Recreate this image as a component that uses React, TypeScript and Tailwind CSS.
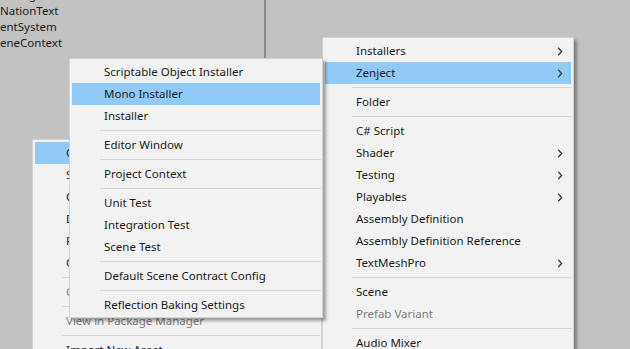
import React from "react";

type Entry = { label: string; arrow?: boolean; disabled?: boolean; active?: boolean } | "sep";

function Chevron() {
  return (
    <svg width="6" height="9" viewBox="0 0 6 9" className="shrink-0">
      <path d="M1.2 0.8 L4.6 4.5 L1.2 8.2" fill="none" stroke="#3c3c3c" strokeWidth="1.3" />
    </svg>
  );
}

function MenuList({ items, textPad, sepPad }: { items: Entry[]; textPad: string; sepPad: string }) {
  return (
    <div className="flex flex-col pt-[2px] pb-px">
      {items.map((it, i) =>
        it === "sep" ? (
          <div key={i} className={`h-[7px] flex items-center mr-px ${sepPad}`}>
            <div className="h-px flex-1 bg-[#d6d6d6]" />
          </div>
        ) : (
          <div
            key={i}
            className={`h-[22px] mx-[2px] flex items-center justify-between pr-[8px] ${textPad} ${
              it.active ? "bg-[#91c9f7]" : ""
            } ${it.disabled ? "text-[#7d7d7d]" : "text-[#1a1a1a]"}`}
          >
            <span className="whitespace-nowrap">{it.label}</span>
            {it.arrow && <Chevron />}
          </div>
        )
      )}
    </div>
  );
}

const createMenu: Entry[] = [
  { label: "Create", active: true },
  { label: "Show in Explorer" },
  { label: "Open" },
  { label: "Delete" },
  { label: "Rename" },
  { label: "Copy Path" },
  "sep",
  { label: "Open Scene Additive", disabled: true },
  "sep",
  { label: "View in Package Manager", disabled: true },
  "sep",
  { label: "Import New Asset..." },
];

const assetMenu: Entry[] = [
  { label: "Installers", arrow: true },
  { label: "Zenject", arrow: true, active: true },
  "sep",
  { label: "Folder" },
  "sep",
  { label: "C# Script" },
  { label: "Shader", arrow: true },
  { label: "Testing", arrow: true },
  { label: "Playables", arrow: true },
  { label: "Assembly Definition" },
  { label: "Assembly Definition Reference" },
  { label: "TextMeshPro", arrow: true },
  "sep",
  { label: "Scene" },
  { label: "Prefab Variant", disabled: true },
  "sep",
  { label: "Audio Mixer" },
];

const zenjectMenu: Entry[] = [
  { label: "Scriptable Object Installer" },
  { label: "Mono Installer", active: true },
  { label: "Installer" },
  "sep",
  { label: "Editor Window" },
  "sep",
  { label: "Project Context" },
  "sep",
  { label: "Unit Test" },
  { label: "Integration Test" },
  { label: "Scene Test" },
  "sep",
  { label: "Default Scene Contract Config" },
  "sep",
  { label: "Reflection Baking Settings" },
];

export default function App() {
  return (
    <div className="relative w-[630px] h-[349px] overflow-hidden bg-[#c2c2c2] font-['Noto_Sans',sans-serif] text-[11.5px] leading-none">
      {/* hierarchy panel behind the menus */}
      <div className="flex h-full">
        <div className="w-[264px] flex flex-col -mt-[13px] text-[#1b1b1b]">
          <div className="h-[16px] flex items-center">Debug</div>
          <div className="h-[16px] flex items-center">NationText</div>
          <div className="h-[16px] flex items-center">entSystem</div>
          <div className="h-[16px] flex items-center">eneContext</div>
        </div>
        <div className="w-[2px] h-full bg-[#8b8b8b]" />
      </div>

      {/* Create menu (parent) */}
      <div className="absolute left-[32px] top-[139px] w-[290px] h-[230px] bg-[#f2f2f2] border border-[#d2d2d2] z-10">
        <MenuList items={createMenu} textPad="pl-[31px]" sepPad="ml-[29px]" />
      </div>

      {/* Assets menu */}
      <div className="absolute left-[322px] top-[37px] w-[252px] h-[330px] bg-[#f2f2f2] border border-[#d2d2d2] shadow-[3px_3px_3px_rgba(0,0,0,0.35)] z-20">
        <MenuList items={assetMenu} textPad="pl-[31px]" sepPad="ml-[29px]" />
      </div>

      {/* Zenject submenu */}
      <div className="absolute left-[69px] top-[58px] w-[254px] bg-[#f2f2f2] border border-[#d2d2d2] shadow-[3px_3px_3px_rgba(0,0,0,0.35)] z-30">
        <MenuList items={zenjectMenu} textPad="pl-[32px]" sepPad="ml-[30px]" />
      </div>
    </div>
  );
}
